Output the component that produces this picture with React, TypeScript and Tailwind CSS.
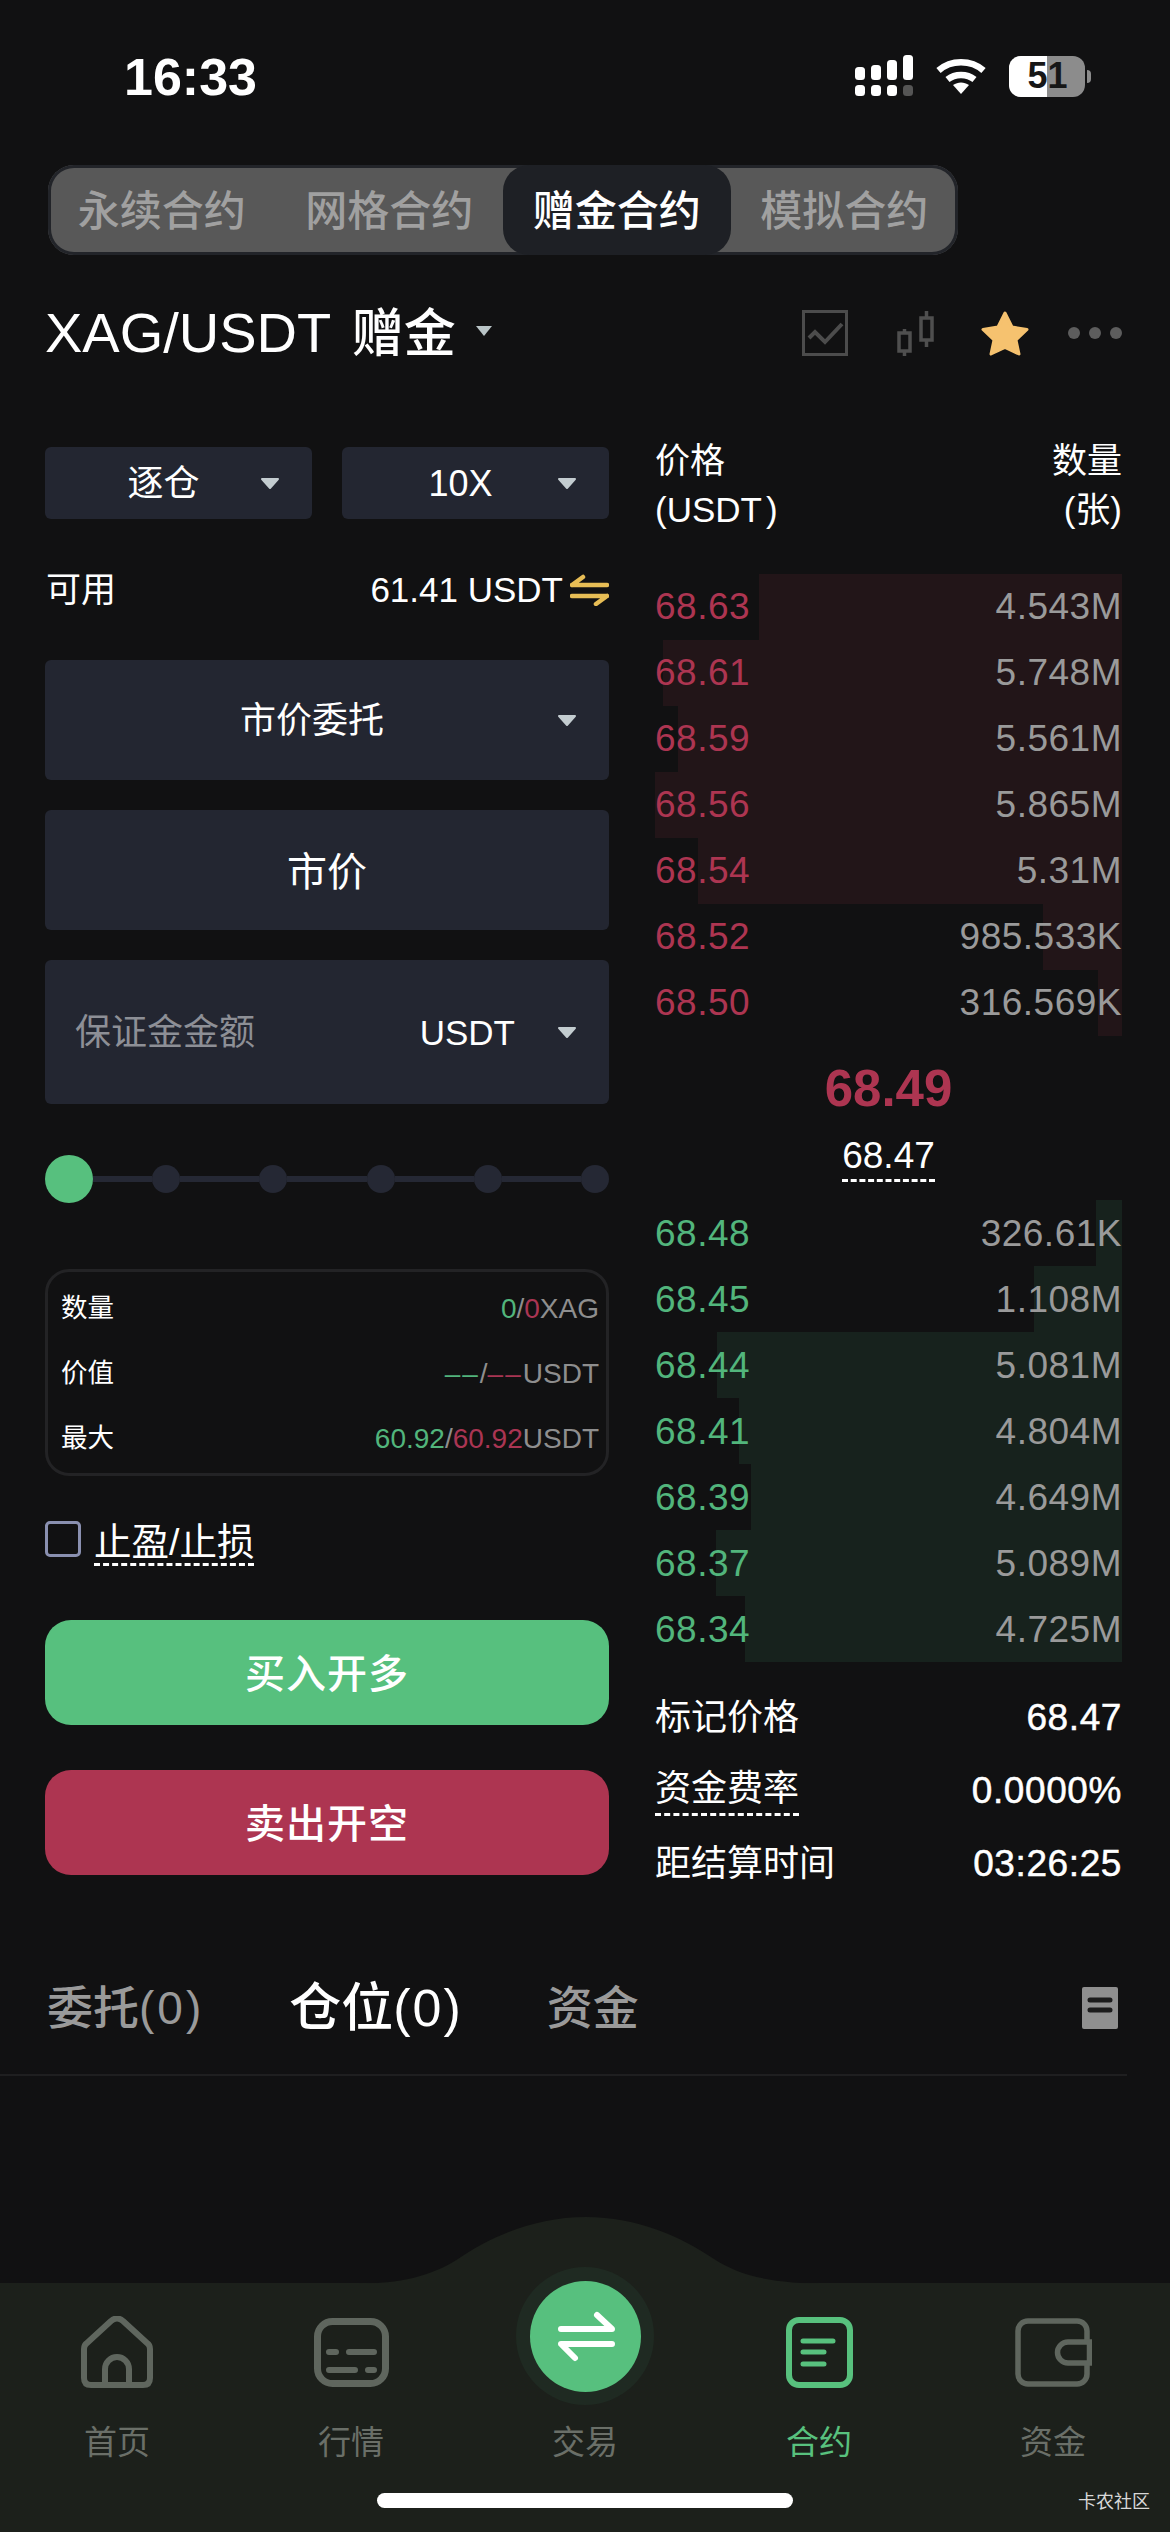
import type { ReactNode } from 'react'

const asks: [string, string, number][] = [
  ['68.63', '4.543M', 363],
  ['68.61', '5.748M', 459],
  ['68.59', '5.561M', 444],
  ['68.56', '5.865M', 467],
  ['68.54', '5.31M', 424],
  ['68.52', '985.533K', 79],
  ['68.50', '316.569K', 24],
]

const bids: [string, string, number][] = [
  ['68.48', '326.61K', 26],
  ['68.45', '1.108M', 88],
  ['68.44', '5.081M', 405],
  ['68.41', '4.804M', 383],
  ['68.39', '4.649M', 371],
  ['68.37', '5.089M', 406],
  ['68.34', '4.725M', 377],
]

function Caret({ className = '' }: { className?: string }) {
  return (
    <svg width="20" height="13" viewBox="0 0 20 13" className={`shrink-0 ${className}`}>
      <path d="M2 2 H18 L10 11 Z" fill="#c3ccd0" stroke="#c3ccd0" strokeWidth="2" strokeLinejoin="round" />
    </svg>
  )
}

function Select({ label, className = '' }: { label: string; className?: string }) {
  return (
    <div className={`flex h-[72px] items-center rounded-md bg-[#232631] ${className}`}>
      <span className="flex-1 pt-[2px] pl-[22px] text-center text-[36px] text-white">{label}</span>
      <Caret className="mr-[32px]" />
    </div>
  )
}

function SignalIcon() {
  const bars = [
    [0, 12, 13],
    [16, 10, 15],
    [32, 5, 20],
    [48, 0, 25],
  ]
  return (
    <svg width="58" height="42" viewBox="0 0 58 42">
      {bars.map(([x, y, h]) => (
        <rect key={x} x={x} y={y} width="10" height={h} rx="3.5" fill="#fff" />
      ))}
      {[0, 16, 32, 48].map((x) => (
        <rect key={x} x={x} y="30" width="10" height="11" rx="3.5" fill={x === 48 ? '#555' : '#fff'} />
      ))}
    </svg>
  )
}

function WifiIcon() {
  return (
    <svg width="52" height="38" viewBox="0 0 52 38" fill="none" stroke="#fff" strokeWidth="6.5">
      <path d="M3.5 13.5 C16 2.5 36 2.5 48.5 13.5" />
      <path d="M12.5 22.5 C20 16.5 32 16.5 39.5 22.5" />
      <path d="M18 28 L26 37 L34 28 C29 24.5 23 24.5 18 28 Z" fill="#fff" stroke="none" />
    </svg>
  )
}

function BatteryIcon() {
  return (
    <div className="flex items-center">
      <div className="relative flex h-[41px] w-[76px] overflow-hidden rounded-[12px] bg-[#8c8c8c]">
        <div className="w-[38px] bg-white" />
        <span className="absolute inset-0 flex items-center justify-center pl-[1px] text-[36px] leading-none font-bold text-[#161616]">
          51
        </span>
      </div>
      <div className="ml-[2px] h-[13px] w-[4px] rounded-r-full bg-[#8c8c8c]" />
    </div>
  )
}

function StatusBar() {
  return (
    <div className="flex h-[165px] shrink-0 items-start pt-[55px] pr-[79px] pl-[124px]">
      <span className="text-[52px] leading-[44px] font-bold text-white">16:33</span>
      <div className="ml-auto flex items-center">
        <SignalIcon />
        <div className="ml-[22px]">
          <WifiIcon />
        </div>
        <div className="ml-[22px]">
          <BatteryIcon />
        </div>
      </div>
    </div>
  )
}

function ContractTabs() {
  const tabs = ['永续合约', '网格合约', '赠金合约', '模拟合约']
  return (
    <div className="ml-[48px] flex h-[90px] w-[910px] shrink-0 rounded-[26px] bg-[#585858] ring-[3px] ring-[#222429] ring-inset">
      {tabs.map((t) => (
        <div
          key={t}
          className={`flex flex-1 items-center justify-center pt-[3px] text-[42px] font-medium ${
            t === '赠金合约' ? 'rounded-[26px] bg-[#1e2025] text-white' : 'text-[#a0a0a0]'
          }`}
        >
          {t}
        </div>
      ))}
    </div>
  )
}

function TitleRow() {
  return (
    <div className="mt-[33px] flex h-[90px] shrink-0 items-center pr-[48px] pl-[45px]">
      <span className="text-[56px] font-medium whitespace-nowrap text-white">
        XAG/USDT <span className="ml-[6px] text-[52px]">赠金</span>
      </span>
      <svg width="18" height="12" viewBox="0 0 18 12" className="mt-[-4px] ml-[19px]">
        <path d="M1 1 H17 L9 11 Z" fill="#b9c4c6" />
      </svg>
      <svg width="46" height="46" viewBox="0 0 46 46" fill="none" stroke="#4c4c4c" className="ml-auto">
        <rect x="1.5" y="1.5" width="43" height="43" strokeWidth="3" />
        <path d="M7 28 L13 22 L23 32 L40 14" strokeWidth="4" />
      </svg>
      <svg width="37" height="45" viewBox="0 0 37 45" fill="none" stroke="#4f4f4f" strokeWidth="3.5" className="ml-[49px]">
        <rect x="2" y="22" width="11" height="18" />
        <path d="M7.5 18 V22 M7.5 40 V45" />
        <rect x="24" y="7" width="11" height="22" />
        <path d="M29.5 0 V7 M29.5 29 V36" />
      </svg>
      <svg width="50" height="47" viewBox="0 0 50 47" className="ml-[46px]">
        <path
          d="M25 3 L32 17 L47 19.5 L36 30 L39 44 L25 37.5 L11 44 L14 30 L3 19.5 L18 17 Z"
          fill="#f6c26f"
          stroke="#f6c26f"
          strokeWidth="3"
          strokeLinejoin="round"
        />
      </svg>
      <div className="ml-[38px] flex gap-[9px]">
        <div className="h-[12px] w-[12px] rounded-full bg-[#5d5d5d]" />
        <div className="h-[12px] w-[12px] rounded-full bg-[#5d5d5d]" />
        <div className="h-[12px] w-[12px] rounded-full bg-[#5d5d5d]" />
      </div>
    </div>
  )
}

function InfoRow({ label, children }: { label: string; children: ReactNode }) {
  return (
    <div className="flex h-[65px] items-center justify-between pt-[1px]">
      <span className="text-[26.5px] text-white">{label}</span>
      <span className="text-[28px] text-[#8e8e8e]">{children}</span>
    </div>
  )
}

function Green({ children, className = '' }: { children: ReactNode; className?: string }) {
  return <span className={`text-[#52b57c] ${className}`}>{children}</span>
}

function Red({ children, className = '' }: { children: ReactNode; className?: string }) {
  return <span className={`text-[#aa3553] ${className}`}>{children}</span>
}

function SliderDot() {
  return <div className="h-[28px] w-[28px] shrink-0 rounded-full bg-[#252834]" />
}

function SliderLine({ className = 'flex-1' }: { className?: string }) {
  return <div className={`h-[6px] bg-[#252834] ${className}`} />
}

function OrderForm() {
  return (
    <div className="w-[564px] shrink-0 pt-[13px]">
      <div className="flex gap-[30px]">
        <Select label="逐仓" className="w-[267px]" />
        <Select label="10X" className="w-[267px]" />
      </div>
      <div className="mt-[36px] flex h-[70px] items-center">
        <span className="ml-[1px] text-[35px] text-white">可用</span>
        <span className="ml-auto text-[35px] text-white">61.41 USDT</span>
        <svg width="39" height="32" viewBox="0 0 39 32" fill="none" stroke="#e7bd55" strokeWidth="4.5" strokeLinecap="round" className="ml-[7px]">
          <path d="M2 11 H37 M2 11 L13 3" />
          <path d="M37 22 H2 M37 22 L26 30" />
        </svg>
      </div>
      <Select label="市价委托" className="mt-[35px] h-[120px]" />
      <div className="mt-[30px] flex h-[120px] items-center justify-center rounded-md bg-[#232631] pt-[3px] text-[40px] text-white">市价</div>
      <div className="mt-[30px] flex h-[144px] items-center rounded-md bg-[#232631] pr-[32px] pl-[30px]">
        <span className="pt-[2px] text-[36px] text-[#8d8f96]">保证金金额</span>
        <span className="mr-[42px] ml-auto pt-[2px] text-[35px] text-white">USDT</span>
        <Caret />
      </div>
      <div className="mt-[51px] flex h-[48px] items-center">
        <div className="h-[48px] w-[48px] shrink-0 rounded-full bg-[#57c07e]" />
        <SliderLine className="w-[59px]" />
        <SliderDot />
        <SliderLine />
        <SliderDot />
        <SliderLine />
        <SliderDot />
        <SliderLine />
        <SliderDot />
        <SliderLine />
        <SliderDot />
      </div>
      <div className="mt-[66px] h-[207px] rounded-[24px] border-[3px] border-[#232325] pt-[4px] pr-[7px] pl-[13px]">
        <InfoRow label="数量">
          <Green>0</Green>/<Red>0</Red>XAG
        </InfoRow>
        <InfoRow label="价值">
          <Green className="tracking-[2px]">––</Green>/<Red className="tracking-[2px]">––</Red>USDT
        </InfoRow>
        <InfoRow label="最大">
          <Green>60.92</Green>/<Red>60.92</Red>USDT
        </InfoRow>
      </div>
      <div className="mt-[45px] flex h-[42px] items-start">
        <div className="h-[36px] w-[36px] rounded-[5px] border-[3px] border-[#8a90b0]" />
        <span className="ml-[13px] border-b-[3px] border-dashed border-white text-[37.5px] leading-[42px] text-white">止盈/止损</span>
      </div>
      <div className="mt-[57px] flex h-[105px] items-center justify-center rounded-[26px] bg-[#57c07e] pt-[2px] text-[40px] font-medium tracking-[1px] text-white">
        买入开多
      </div>
      <div className="mt-[45px] flex h-[105px] items-center justify-center rounded-[26px] bg-[#ad3551] pt-[2px] text-[40px] font-medium tracking-[1px] text-white">
        卖出开空
      </div>
    </div>
  )
}

function BookRow({ price, qty, width, side }: { price: string; qty: string; width: number; side: 'ask' | 'bid' }) {
  return (
    <div className={`relative flex h-[66px] items-center justify-between text-[37px] tracking-[0.5px] ${side === 'bid' ? 'pt-[2px]' : ''}`}>
      <div
        className={`absolute top-0 right-0 bottom-0 ${side === 'ask' ? 'bg-[#221518]' : 'bg-[#17221d]'}`}
        style={{ width }}
      />
      <span className={`relative ${side === 'ask' ? 'text-[#ad3551]' : 'text-[#52b57c]'}`}>{price}</span>
      <span className="relative text-[#9a9a9a]">{qty}</span>
    </div>
  )
}

function StatValue({ children }: { children: ReactNode }) {
  return <span className="text-[37px] tracking-[0.6px] [-webkit-text-stroke:0.5px_white]">{children}</span>
}

function OrderBook() {
  return (
    <div className="ml-[46px] w-[467px] shrink-0">
      <div className="flex justify-between pt-[2px] text-[35px] leading-[49px] text-white">
        <div>
          <div>价格</div>
          <div>
            (USDT<span className="ml-[4px]">)</span>
          </div>
        </div>
        <div className="text-right">
          <div>数量</div>
          <div>(张)</div>
        </div>
      </div>
      <div className="mt-[40px]">
        {asks.map(([p, q, w]) => (
          <BookRow key={p} price={p} qty={q} width={w} side="ask" />
        ))}
      </div>
      <div className="mt-[13px] h-[76px] pt-[2px] text-center text-[51px] leading-[76px] font-bold text-[#ad3551]">68.49</div>
      <div className="mt-[6px] flex justify-center">
        <span className="border-b-[3px] border-dashed border-white pt-[1px] text-[37px] leading-[47px] text-white">68.47</span>
      </div>
      <div className="mt-[18px]">
        {bids.map(([p, q, w]) => (
          <BookRow key={p} price={p} qty={q} width={w} side="bid" />
        ))}
      </div>
      <div className="mt-[19px] text-white">
        <div className="flex h-[73px] items-center justify-between">
          <span className="text-[36px]">标记价格</span>
          <StatValue>68.47</StatValue>
        </div>
        <div className="flex h-[73px] items-center justify-between">
          <span className="border-b-[3px] border-dashed border-white text-[36px] leading-[48px]">资金费率</span>
          <StatValue>0.0000%</StatValue>
        </div>
        <div className="flex h-[73px] items-center justify-between">
          <span className="text-[36px]">距结算时间</span>
          <StatValue>03:26:25</StatValue>
        </div>
      </div>
    </div>
  )
}

function PositionTabs() {
  return (
    <>
      <div className="mt-[63px] flex h-[90px] shrink-0 items-center pr-[52px] pl-[47px]">
        <span className="text-[46px] font-medium text-[#9a9a9a]">
          委托<span className="tracking-[3px]">(0)</span>
        </span>
        <span className="ml-[85px] text-[52px] font-medium text-white">
          仓位<span className="tracking-[2px]">(0)</span>
        </span>
        <span className="ml-[84px] text-[46px] font-medium text-[#9a9a9a]">资金</span>
        <svg width="36" height="42" viewBox="0 0 36 42" className="ml-auto">
          <rect width="36" height="42" rx="2" fill="#8f8f8f" />
          <path d="M8 13 H28 M8 23 H28" stroke="#1b1b1b" strokeWidth="5" strokeLinecap="round" />
        </svg>
      </div>
      <div className="mt-[21px] h-[2px] w-[1127px] shrink-0 bg-[#1f1f20]" />
    </>
  )
}

function HomeIcon() {
  return (
    <svg width="72" height="72" viewBox="0 0 72 72" fill="none" stroke="#5f665e" strokeWidth="6" strokeLinejoin="round">
      <path d="M3 33 Q3 29 6 27 L30 5 Q36 0 42 5 L66 27 Q69 29 69 33 V62 Q69 69 62 69 H10 Q3 69 3 62 Z" />
      <path d="M24 69 V53 A12 12 0 0 1 48 53 V69" />
    </svg>
  )
}

function MarketIcon() {
  return (
    <svg width="75" height="69" viewBox="0 0 75 69" fill="none" stroke="#5f665e" strokeLinecap="round">
      <rect x="3.5" y="3.5" width="68" height="62" rx="15" strokeWidth="7" />
      <path d="M15 34 H22 M35 34 H60 M15 52 H41 M54 52 H60" strokeWidth="6" />
    </svg>
  )
}

function TradeIcon() {
  return (
    <div className="absolute top-[-49px] left-1/2 flex h-[138px] w-[138px] -translate-x-1/2 items-center justify-center rounded-full bg-[#1f2a22]">
      <svg width="111" height="111" viewBox="0 0 111 111" fill="none" stroke="#fff" strokeWidth="6" strokeLinecap="round" strokeLinejoin="round">
        <circle cx="55.5" cy="55.5" r="55.5" fill="#57c07e" stroke="none" />
        <path d="M31 48 H82 L67 34" />
        <path d="M82 63 H31 L45 77" />
      </svg>
    </div>
  )
}

function ContractIcon() {
  return (
    <svg width="67" height="71" viewBox="0 0 67 71" fill="none" stroke="#58c17e" strokeLinecap="round">
      <rect x="3" y="3" width="61" height="65" rx="10" strokeWidth="6" />
      <path d="M17 24 H47 M17 35 H38 M17 47 H38" strokeWidth="5" />
    </svg>
  )
}

function WalletIcon() {
  return (
    <svg width="77" height="69" viewBox="0 0 77 69" fill="none" stroke="#5f665e" strokeWidth="5.5">
      <rect x="3" y="3" width="69" height="63" rx="10" />
      <path d="M74.5 24 H53 A10.5 10.5 0 0 0 53 45 H74.5 Z" fill="#1c201b" />
    </svg>
  )
}

function BottomNav() {
  const items: { label: string; icon: ReactNode; active?: boolean }[] = [
    { label: '首页', icon: <HomeIcon /> },
    { label: '行情', icon: <MarketIcon /> },
    { label: '交易', icon: <TradeIcon /> },
    { label: '合约', icon: <ContractIcon />, active: true },
    { label: '资金', icon: <WalletIcon /> },
  ]
  return (
    <div className="relative mt-auto h-[249px] shrink-0 bg-[#1c201b]">
      <svg width="490" height="67" viewBox="0 0 490 67" className="absolute top-[-66px] left-[340px]">
        <path d="M0 67 H18 C60 66 90 60 118 42 C150 20 195 0 246 0 C297 0 342 20 374 42 C402 60 432 66 490 67 Z" fill="#1c201b" />
      </svg>
      <div className="grid grid-cols-5 pt-[33px]">
        {items.map((it) => (
          <div key={it.label} className="flex flex-col items-center">
            <div className="relative flex h-[72px] w-full items-center justify-center">{it.icon}</div>
            <span className={`mt-[33px] text-[33px] leading-[44px] ${it.active ? 'text-[#58c17e]' : 'text-[#6a6f68]'}`}>{it.label}</span>
          </div>
        ))}
      </div>
      <div className="absolute top-[210px] left-[377px] h-[15px] w-[416px] rounded-full bg-white" />
      <span className="absolute top-[205px] right-[20px] text-[18px] leading-[28px] text-[#d8d8d8]">卡农社区</span>
    </div>
  )
}

export default function App() {
  return (
    <div className="flex h-[2532px] w-[1170px] flex-col overflow-hidden bg-[#111112] font-['Liberation_Sans','Noto_Sans_CJK_SC',sans-serif]">
      <StatusBar />
      <ContractTabs />
      <TitleRow />
      <div className="mt-[56px] flex shrink-0 pl-[45px]">
        <OrderForm />
        <OrderBook />
      </div>
      <PositionTabs />
      <BottomNav />
    </div>
  )
}
